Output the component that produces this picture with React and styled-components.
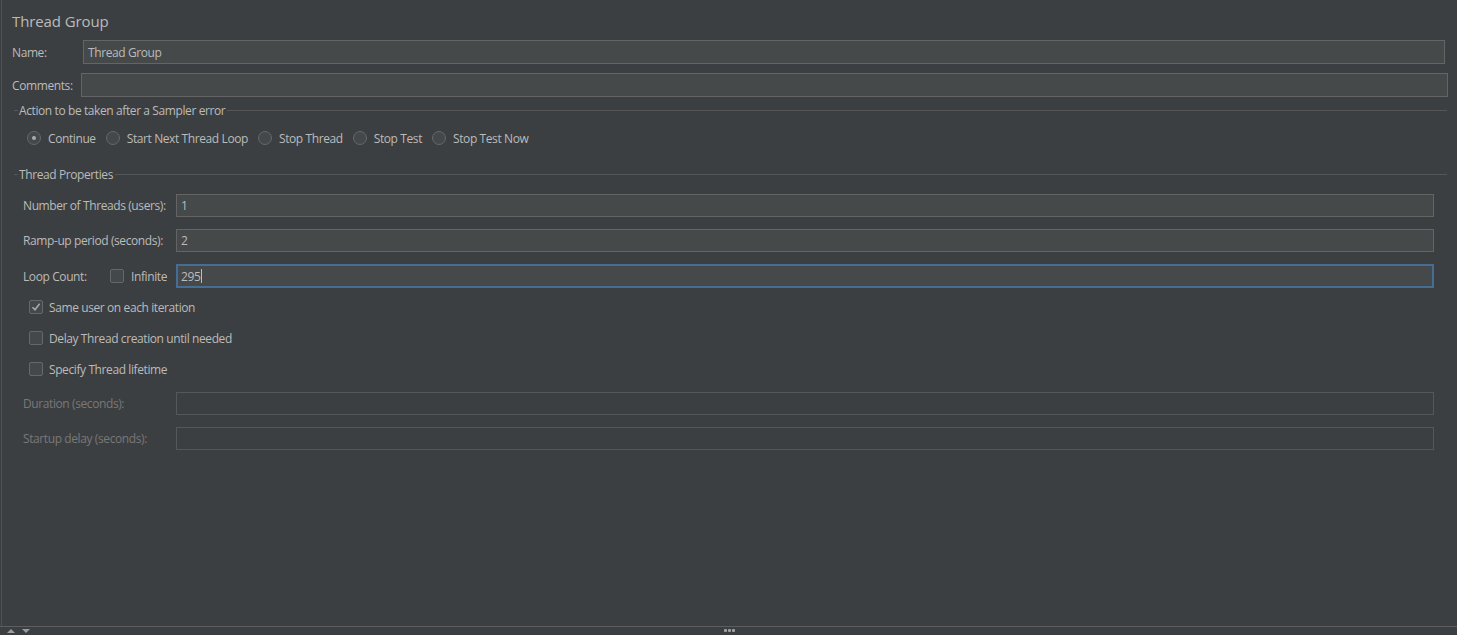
import React from "react";
import styled, { createGlobalStyle } from "styled-components";

const GlobalStyle = createGlobalStyle`
  html, body {
    margin: 0;
    padding: 0;
    background: #3c3f41;
  }
  body {
    font-family: "Open Sans", "Noto Sans", sans-serif;
    font-size: 12px;
    letter-spacing: -0.4px;
    color: #bbbbbb;
  }
`;

const Page = styled.div`
  width: 1457px;
  height: 635px;
  display: flex;
  flex-direction: column;
  background: #3c3f41;
  overflow: hidden;
`;

const Panel = styled.div`
  flex: 1;
  display: flex;
  flex-direction: column;
  margin-left: 1px;
  border-left: 1px solid #4f5254;
`;

const Title = styled.div`
  margin: 12px 0 0 10px;
  font-size: 15px;
  letter-spacing: -0.1px;
  line-height: 18px;
  height: 18px;
`;

const Row = styled.div`
  display: flex;
  align-items: center;
  margin: ${(p) => p.$margin || "0"};
  height: ${(p) => p.$height || 24}px;
`;

const Label = styled.label`
  flex: none;
  width: ${(p) => p.$width}px;
  white-space: nowrap;
  color: ${(p) => (p.$disabled ? "#787878" : "#bbbbbb")};
`;

const Input = styled.div`
  flex: 1;
  box-sizing: border-box;
  height: 100%;
  background: ${(p) => (p.$disabled ? "#3c3f41" : "#45494a")};
  border: ${(p) => (p.$focus ? "2px solid #466d94" : "1px solid #646464")};
  border-color: ${(p) => (p.$disabled ? "#555759" : p.$focus ? "#466d94" : "#646464")};
  display: flex;
  align-items: center;
  padding-left: ${(p) => (p.$focus ? 3 : 4)}px;
  color: #bbbbbb;
  white-space: nowrap;
`;

const Caret = styled.span`
  display: inline-block;
  width: 1px;
  height: 14px;
  background: #bbbbbb;
  margin-left: 1px;
`;

const GroupTitle = styled.div`
  display: flex;
  align-items: center;
  height: 14px;
  margin: ${(p) => p.$margin};
  &::before {
    content: "";
    width: 4px;
    border-top: 1px solid #555759;
    margin-right: 1px;
  }
  &::after {
    content: "";
    flex: 1;
    border-top: 1px solid #555759;
    margin-left: 2px;
  }
`;

const RadioRow = styled.div`
  display: flex;
  align-items: center;
  height: 16px;
  margin: 13px 0 0 25px;
  gap: 10px;
`;

const Choice = styled.div`
  display: flex;
  align-items: center;
  gap: 7px;
  white-space: nowrap;
`;

const Radio = styled.span`
  width: 14px;
  height: 14px;
  box-sizing: border-box;
  border-radius: 50%;
  border: 1px solid #656769;
  background: #43494a;
  display: flex;
  align-items: center;
  justify-content: center;
  &::after {
    content: "";
    width: 4px;
    height: 4px;
    border-radius: 50%;
    background: ${(p) => (p.$checked ? "#a9abad" : "transparent")};
  }
`;

const Box = styled.span`
  flex: none;
  width: 14px;
  height: 14px;
  box-sizing: border-box;
  border: 1px solid #656769;
  border-radius: 2px;
  background: #43494a;
  display: flex;
  align-items: center;
  justify-content: center;
`;

const Fields = styled.div`
  display: flex;
  flex-direction: column;
  margin: 13px 23px 0 21px;
  gap: 12px;
`;

const Checks = styled.div`
  display: flex;
  flex-direction: column;
  gap: 17px;
  margin: 12px 0 0 27px;
`;

const CheckRow = styled.div`
  display: flex;
  align-items: center;
  gap: 6px;
  height: 14px;
  white-space: nowrap;
`;

const LoopExtras = styled.div`
  display: flex;
  align-items: center;
  gap: 7px;
  margin: 0 9px 0 -66px;
  flex: none;
`;

const Disabled = styled.div`
  display: flex;
  flex-direction: column;
  gap: 12px;
  margin: 16px 23px 0 21px;
`;

const BottomBar = styled.div`
  flex: none;
  height: 8px;
  border-top: 1px solid #5b5d5f;
  display: flex;
  align-items: center;
  position: relative;
  padding-left: 7px;
  gap: 4px;
`;

const Arrow = styled.span`
  width: 0;
  height: 0;
  border-left: 4px solid transparent;
  border-right: 4px solid transparent;
  ${(p) =>
    p.$up
      ? "border-bottom: 4px solid #9a9c9e;"
      : "border-top: 4px solid #9a9c9e;"}
  margin-right: 3px;
`;

const Dots = styled.div`
  position: absolute;
  left: 724px;
  top: 2px;
  display: flex;
  gap: 1px;
  span {
    width: 3px;
    height: 3px;
    background: #a0a2a4;
    border-radius: 1px;
  }
`;

const Check = () => (
  <svg width="10" height="10" viewBox="0 0 10 10">
    <path d="M1.5 5.2 L4 7.8 L8.6 1.8" fill="none" stroke="#a9abad" strokeWidth="1.5" />
  </svg>
);

const App = () => {
  const actions = ["Continue", "Start Next Thread Loop", "Stop Thread", "Stop Test", "Stop Test Now"];
  return (
    <Page>
      <GlobalStyle />
      <Panel>
        <Title>Thread Group</Title>
        <Row $margin="10px 12px 0 10px">
          <Label $width={71}>Name:</Label>
          <Input>Thread Group</Input>
        </Row>
        <Row $margin="9px 9px 0 10px">
          <Label $width={69}>Comments:</Label>
          <Input />
        </Row>

        <GroupTitle $margin="6px 10px 0 12px">Action to be taken after a Sampler error</GroupTitle>
        <RadioRow>
          {actions.map((a, i) => (
            <Choice key={a}>
              <Radio $checked={i === 0} />
              {a}
            </Choice>
          ))}
        </RadioRow>

        <GroupTitle $margin="21px 10px 0 12px">Thread Properties</GroupTitle>
        <Fields>
          <Row $height={23}>
            <Label $width={153}>Number of Threads (users):</Label>
            <Input>1</Input>
          </Row>
          <Row $height={23}>
            <Label $width={153}>Ramp-up period (seconds):</Label>
            <Input>2</Input>
          </Row>
          <Row $height={24}>
            <Label $width={153}>Loop Count:</Label>
            <LoopExtras>
              <Box />
              Infinite
            </LoopExtras>
            <Input $focus>
              295
              <Caret />
            </Input>
          </Row>
        </Fields>

        <Checks>
          <CheckRow>
            <Box>
              <Check />
            </Box>
            Same user on each iteration
          </CheckRow>
          <CheckRow>
            <Box />
            Delay Thread creation until needed
          </CheckRow>
          <CheckRow>
            <Box />
            Specify Thread lifetime
          </CheckRow>
        </Checks>

        <Disabled>
          <Row $height={23}>
            <Label $width={153} $disabled>
              Duration (seconds):
            </Label>
            <Input $disabled />
          </Row>
          <Row $height={23}>
            <Label $width={153} $disabled>
              Startup delay (seconds):
            </Label>
            <Input $disabled />
          </Row>
        </Disabled>
      </Panel>
      <BottomBar>
        <Arrow $up />
        <Arrow />
        <Dots>
          <span />
          <span />
          <span />
        </Dots>
      </BottomBar>
    </Page>
  );
};

export default App;
